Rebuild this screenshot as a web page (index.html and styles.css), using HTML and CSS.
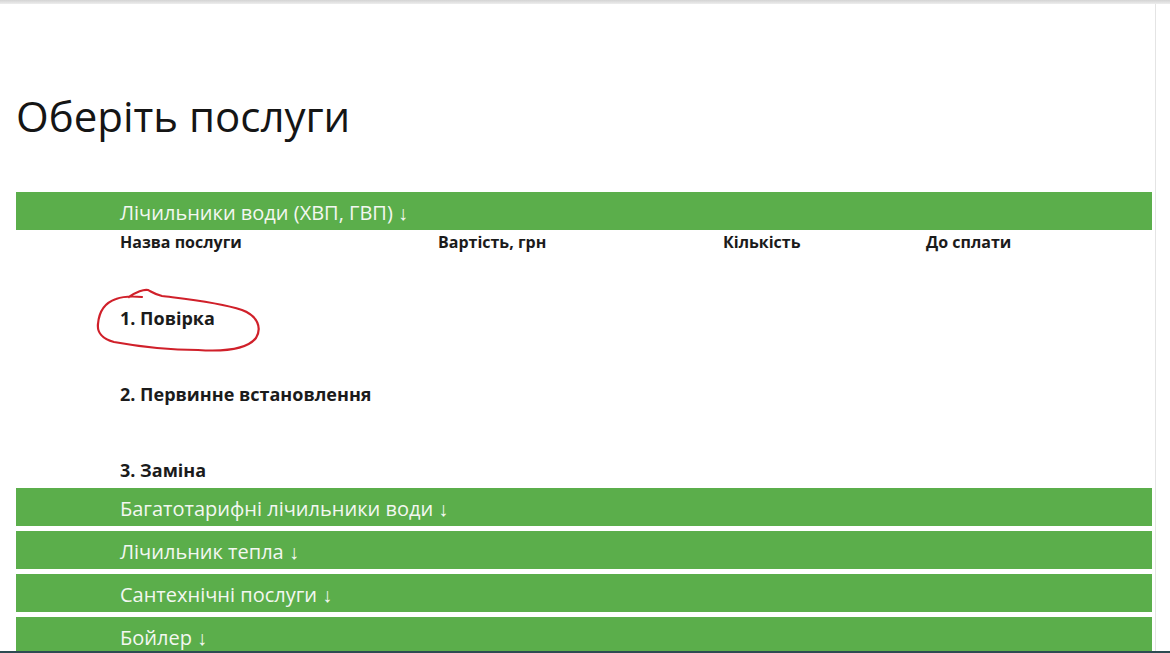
FILE: index.html
```html
<!DOCTYPE html>
<html lang="uk">
<head>
    <meta charset="UTF-8">
    <meta name="viewport" content="width=device-width, initial-scale=1.0">
    <title>Оберіть послуги</title>
    <link rel="stylesheet" href="styles.css">
</head>
<body>
    <div class="topbar"></div>
    <div class="page">
        <h1>Оберіть послуги</h1>

        <div class="group open">
            <div class="group-title">Лічильники води (ХВП, ГВП) &darr;</div>
            <div class="services">
                <div class="row head">
                    <span>Назва послуги</span>
                    <span>Вартість, грн</span>
                    <span>Кількість</span>
                    <span>До сплати</span>
                </div>
                <div class="row item marked">
                    <span>1. Повірка</span>
                    <span></span><span></span><span></span>
                    <svg class="circle" width="172" height="70" viewBox="0 0 172 70">
                        <path d="M33 9 C40 4 48 1 52 2 C56 4 58 6 66 8 C90 11 122 14 146 22 C162 28 166 40 160 50 C152 60 132 64 102 62 C72 62 40 58 18 54 C6 51 1 44 2 36 C3 24 8 15 20 11 C28 8 36 8 46 9" fill="none" stroke="#d0202a" stroke-width="2.2" stroke-linecap="round" stroke-linejoin="round"/>
                    </svg>
                </div>
                <div class="row item">
                    <span>2. Первинне встановлення</span>
                    <span></span><span></span><span></span>
                </div>
                <div class="row item">
                    <span>3. Заміна</span>
                    <span></span><span></span><span></span>
                </div>
            </div>
        </div>

        <div class="group">
            <div class="group-title">Багатотарифні лічильники води &darr;</div>
        </div>
        <div class="group">
            <div class="group-title">Лічильник тепла &darr;</div>
        </div>
        <div class="group">
            <div class="group-title">Сантехнічні послуги &darr;</div>
        </div>
        <div class="group">
            <div class="group-title">Бойлер &darr;</div>
        </div>
    </div>
    <div class="taskbar-edge"></div>
</body>
</html>
```

FILE: styles.css
```css
html, body {
    margin: 0;
    padding: 0;
    background: #fff;
    overflow: hidden;
}
body {
    font-family: "Open Sans", "Noto Sans", sans-serif;
    color: #1b1b1b;
}
.topbar {
    height: 4px;
    background: linear-gradient(#d3d3d3, #ededed);
}
.page {
    width: 1139px;
    padding: 0 0 0 16px;
    border-right: 1px solid #e4e4e4;
    min-height: 660px;
}
h1 {
    font-size: 42px;
    font-weight: 400;
    line-height: 50px;
    margin: 0;
    padding: 87px 0 0;
    height: 101px;
    color: #151515;
}
.group {
    width: 1136px;
    margin-bottom: 5px;
}
.group-title {
    background-color: #5bae4b;
    color: #f3f7f1;
    font-size: 20px;
    line-height: 34px;
    height: 34px;
    padding: 4px 0 0 104px;
}
.services {
    padding: 1px 0 2px 104px;
}
.row {
    display: grid;
    grid-template-columns: 318px 285px 203px 1fr;
    font-size: 16px;
    font-weight: 700;
    line-height: 22px;
    position: relative;
}
.row.item {
    margin-top: 54px;
    font-size: 18px;
}
.circle {
    position: absolute;
    left: -24px;
    top: -19px;
}
.taskbar-edge {
    position: fixed;
    left: 0;
    right: 0;
    bottom: 0;
    height: 2px;
    background: #2d4b52;
}
```
